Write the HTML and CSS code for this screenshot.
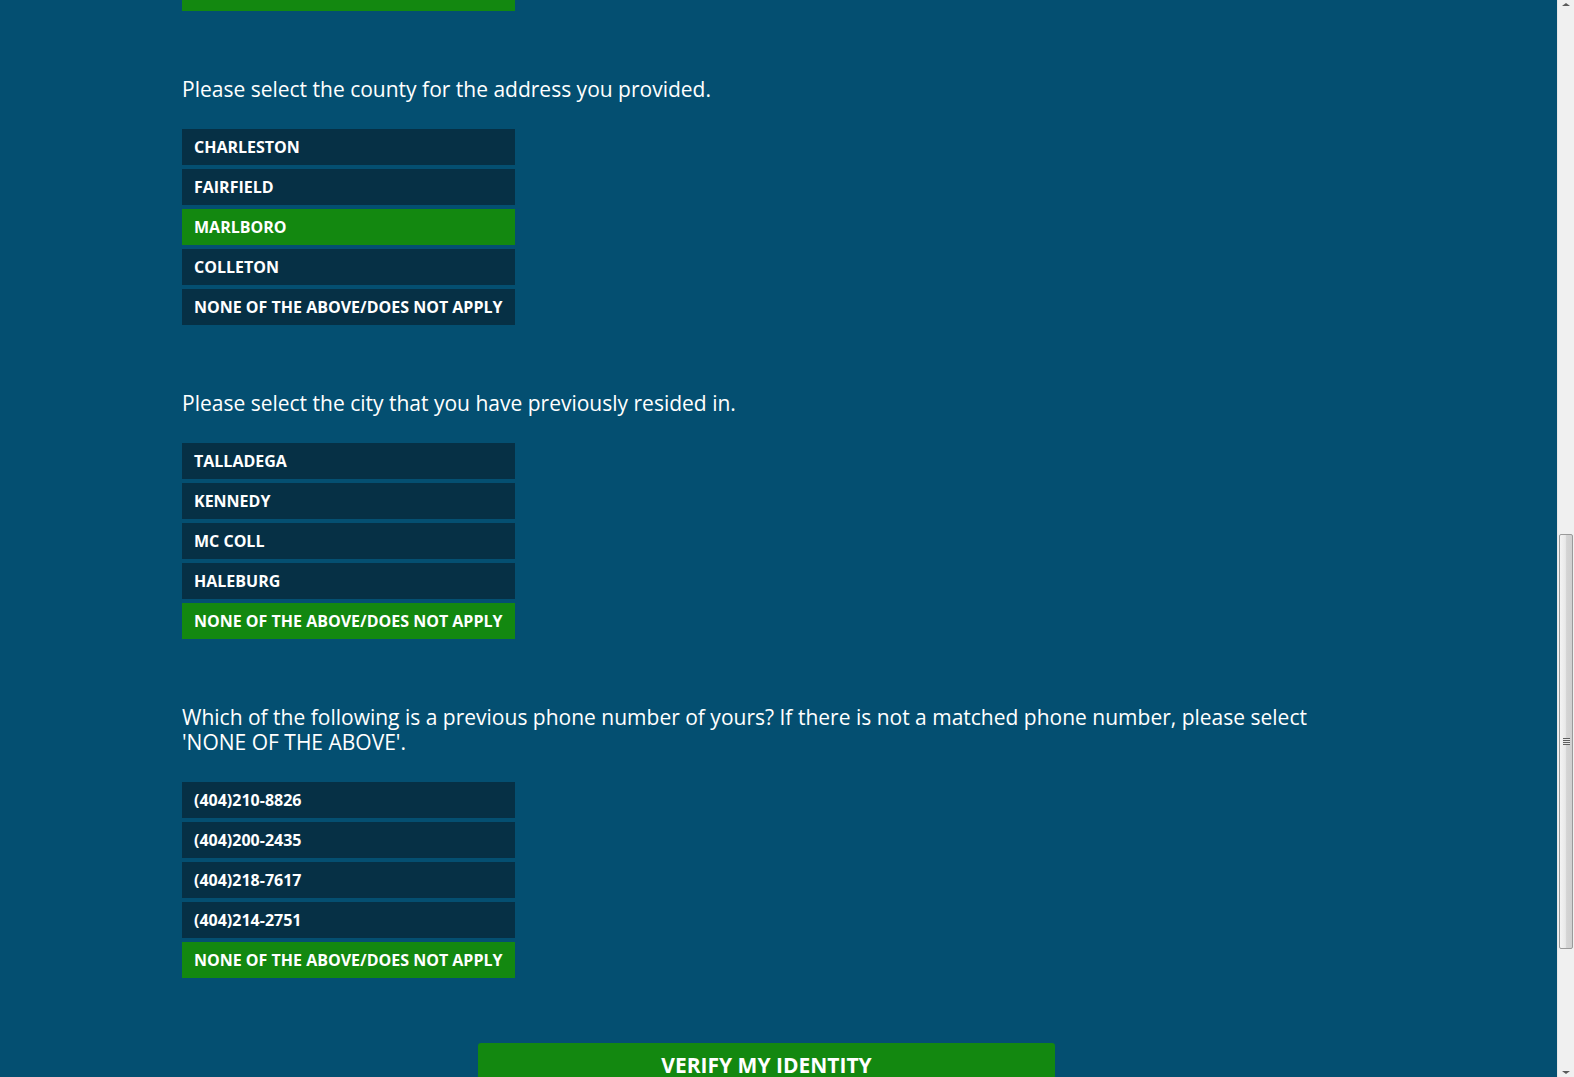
FILE: index.html
```html
<!DOCTYPE html>
<html lang="en">
<head>
<meta charset="utf-8">
<title>Verify identity</title>
<link rel="stylesheet" href="styles.css">
</head>
<body>
<div class="page">
  <main class="main">
    <div class="container">
      <div class="prev-option"></div>

      <section class="question">
        <p class="prompt">Please select the county for the address you provided.</p>
        <div class="options">
          <div class="option">CHARLESTON</div>
          <div class="option">FAIRFIELD</div>
          <div class="option selected">MARLBORO</div>
          <div class="option">COLLETON</div>
          <div class="option">NONE OF THE ABOVE/DOES NOT APPLY</div>
        </div>
      </section>

      <section class="question">
        <p class="prompt">Please select the city that you have previously resided in.</p>
        <div class="options">
          <div class="option">TALLADEGA</div>
          <div class="option">KENNEDY</div>
          <div class="option">MC COLL</div>
          <div class="option">HALEBURG</div>
          <div class="option selected">NONE OF THE ABOVE/DOES NOT APPLY</div>
        </div>
      </section>

      <section class="question">
        <p class="prompt">Which of the following is a previous phone number of yours? If there is not a matched phone number, please select 'NONE OF THE ABOVE'.</p>
        <div class="options">
          <div class="option">(404)210-8826</div>
          <div class="option">(404)200-2435</div>
          <div class="option">(404)218-7617</div>
          <div class="option">(404)214-2751</div>
          <div class="option selected">NONE OF THE ABOVE/DOES NOT APPLY</div>
        </div>
      </section>

      <div class="submit-row">
        <button class="verify" type="button">VERIFY MY IDENTITY</button>
      </div>
    </div>
  </main>

  <div class="scrollbar">
    <div class="arrow arrow-up"></div>
    <div class="track track-top"></div>
    <div class="thumb"><span class="grip"></span></div>
    <div class="track track-bottom"></div>
    <div class="arrow arrow-down"></div>
  </div>
</div>
</body>
</html>
```

FILE: styles.css
```css
html, body {
  margin: 0;
  padding: 0;
  height: 1077px;
  overflow: hidden;
}

body {
  background: #044f71;
  font-family: "Open Sans", "DejaVu Sans", sans-serif;
  color: #ffffff;
}

.page {
  display: flex;
  height: 1077px;
}

.main {
  flex: 1;
  overflow: hidden;
}

.container {
  width: 1169px;
  margin-left: 182px;
}

.prev-option {
  width: 333px;
  height: 11px;
  background: #138810;
}

.question {
  padding-top: 66px;
}

.prompt {
  margin: 0 0 27px 0;
  font-size: 21px;
  line-height: 25px;
  font-weight: 400;
  letter-spacing: 0;
}

.options {
  display: flex;
  flex-direction: column;
  gap: 4px;
  width: 333px;
}

.option {
  height: 36px;
  line-height: 36px;
  padding-left: 12px;
  background: #063045;
  font-size: 16px;
  font-weight: 700;
  white-space: nowrap;
}

.option.selected {
  background: #138810;
}

.submit-row {
  display: flex;
  justify-content: center;
  padding-top: 65px;
}

.verify {
  width: 577px;
  height: 52px;
  border: none;
  border-radius: 3px;
  background: #138810;
  color: #ffffff;
  font-family: "Open Sans", "DejaVu Sans", sans-serif;
  font-size: 21px;
  font-weight: 700;
  padding: 8px 0 0 0;
  text-align: center;
  align-self: flex-start;
  line-height: 28px;
  display: flex;
  align-items: flex-start;
  justify-content: center;
}

/* Windows-style scrollbar */
.scrollbar {
  width: 17px;
  height: 1077px;
  display: flex;
  flex-direction: column;
  background: #f0f0f0;
  border-left: 1px solid #e6e6e6;
  box-sizing: border-box;
}

.arrow {
  height: 17px;
  display: flex;
  justify-content: center;
}

.arrow-up::before,
.arrow-down::before {
  content: "";
  width: 0;
  height: 0;
  border-left: 4px solid transparent;
  border-right: 4px solid transparent;
}

.arrow-up {
  align-items: flex-start;
  padding-top: 3px;
  box-sizing: border-box;
}

.arrow-up::before {
  border-bottom: 3px solid #5a5a5a;
}

.arrow-down {
  align-items: flex-end;
  padding-bottom: 3px;
  box-sizing: border-box;
}

.arrow-down::before {
  border-top: 3px solid #5a5a5a;
}

.track-top {
  height: 517px;
}

.track-bottom {
  flex: 1;
}

.thumb {
  height: 415px;
  margin: 0 1px 0 1px;
  border: 1px solid #9a9a9a;
  border-radius: 2px;
  background: linear-gradient(to right, #f4f4f4 0%, #e8e8e8 45%, #d4d4d4 55%, #cfcfcf 100%);
  display: flex;
  align-items: center;
  justify-content: center;
  box-sizing: border-box;
}

.grip {
  width: 7px;
  height: 7px;
  background: repeating-linear-gradient(to bottom, #5f5f5f 0, #5f5f5f 1px, #e8e8e8 1px, #e8e8e8 2px);
}
```
